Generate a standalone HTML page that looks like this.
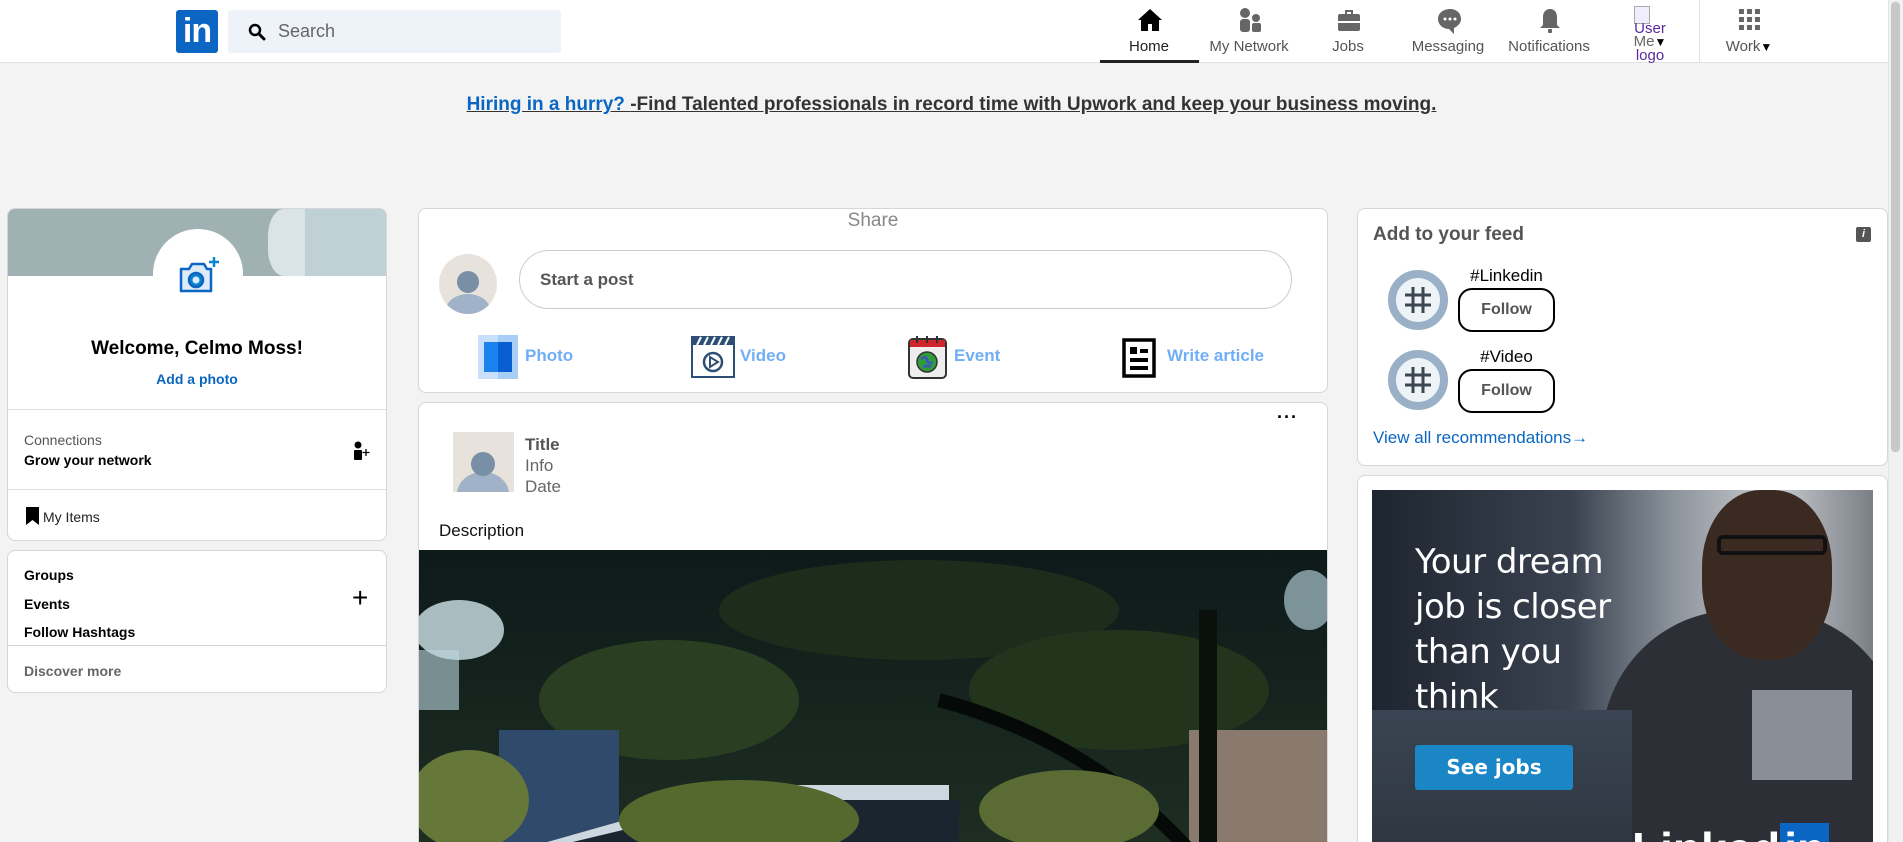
<!DOCTYPE html>
<html style="width:1903px;height:842px;overflow:hidden"><head><meta charset="utf-8">
<style>
*{box-sizing:border-box;margin:0;padding:0}
body{width:1903px;height:842px;overflow:hidden;background:#f3f3f3;font-family:"Liberation Sans",Arial,sans-serif;position:relative}
.abs{position:absolute}
.nav{position:absolute;left:0;top:0;width:1903px;height:63px;background:#fff;border-bottom:1px solid #e2e2e2}
.ni{position:absolute;top:0;width:100px;height:63px;text-align:center;font-size:15px;color:#555}
.ni svg{position:absolute;left:38px;top:7px}
.ni>span{position:absolute;left:0;right:0;top:38px;white-space:nowrap}
.card{position:absolute;background:#fff;border:1px solid #d6d6d6;border-radius:8px;overflow:hidden}
.b{font-weight:bold}
.hr{position:absolute;left:0;right:0;height:1px;background:#ddd}
</style></head><body>
<div class="nav">
  <div class="abs" style="left:176px;top:10px;width:42px;height:43px;background:#0a66c2;border-radius:3px;color:#fff;font-weight:bold;font-size:34px;line-height:43px;text-align:center;letter-spacing:-1px">in</div>
  <div class="abs" style="left:228px;top:10px;width:333px;height:43px;background:#edf3f8;border-radius:3px">
    <svg class="abs" style="left:20px;top:13px" width="18" height="18" viewBox="0 0 18 18"><circle cx="7" cy="7" r="5" fill="none" stroke="#000" stroke-width="2.5"/><path d="M11 11l5 5" stroke="#000" stroke-width="3" stroke-linecap="round"/></svg>
    <span class="abs" style="left:50px;top:11px;font-size:18px;color:#666">Search</span>
  </div>
  <div class="ni" style="left:1099px;color:#222"><svg width="26" height="26" viewBox="0 0 26 26"><path d="M13 2L1 13h3v11h7v-7h4v7h7V13h3z" fill="#000"/></svg><span>Home</span></div>
  <div class="abs" style="left:1100px;top:60px;width:99px;height:3px;background:#222"></div>
  <div class="ni" style="left:1199px"><svg width="26" height="26" viewBox="0 0 26 26"><circle cx="8" cy="6" r="5" fill="#666"/><rect x="3" y="12" width="10" height="13" rx="3" fill="#666"/><circle cx="19" cy="11" r="4" fill="#666"/><rect x="15" y="16" width="9" height="9" rx="2" fill="#666"/></svg><span>My Network</span></div>
  <div class="ni" style="left:1298px"><svg width="26" height="26" viewBox="0 0 26 26"><path d="M9 3h8v4h-2V5h-4v2H9z" fill="#666"/><rect x="2" y="7" width="22" height="17" rx="2" fill="#666"/><rect x="2" y="14" width="22" height="2" fill="#fff"/></svg><span>Jobs</span></div>
  <div class="ni" style="left:1398px"><svg width="28" height="28" viewBox="0 0 28 28"><path d="M14 2C7 2 2 6.5 2 12s5 10 11 10l5 5v-6c4-2 7-5 7-9C25 6.5 21 2 14 2z" fill="#666"/><circle cx="9" cy="12" r="1.5" fill="#fff"/><circle cx="14" cy="12" r="1.5" fill="#fff"/><circle cx="19" cy="12" r="1.5" fill="#fff"/></svg><span>Messaging</span></div>
  <div class="ni" style="left:1499px"><svg width="26" height="28" viewBox="0 0 26 28"><path d="M13 2c-5 0-7 4-7 8v8l-3 3h20l-3-3v-8c0-4-2-8-7-8z" fill="#666"/><rect x="11" y="22" width="4" height="4" rx="1" fill="#666"/></svg><span>Notifications</span></div>
  <div class="abs" style="left:1634px;top:6px;width:16px;height:18px;border:1px solid #aaa;background:#eef"></div>
  <div class="abs" style="left:1630px;top:22px;width:40px;text-align:center;font-size:15px;line-height:13px;color:#5b2aa0">User<br><span style="color:#666">Me</span><span style="color:#000;font-size:12px">▼</span><br>logo</div>
  <div class="abs" style="left:1699px;top:0;width:1px;height:63px;background:#e2e2e2"></div>
  <div class="ni" style="left:1699px"><svg width="24" height="24" viewBox="0 0 24 24" fill="#666"><rect x="2" y="2" width="5" height="5"/><rect x="10" y="2" width="5" height="5"/><rect x="18" y="2" width="5" height="5"/><rect x="2" y="10" width="5" height="5"/><rect x="10" y="10" width="5" height="5"/><rect x="18" y="10" width="5" height="5"/><rect x="2" y="18" width="5" height="5"/><rect x="10" y="18" width="5" height="5"/><rect x="18" y="18" width="5" height="5"/></svg><span>Work<span style="color:#000;font-size:12px">▼</span></span></div>
</div>
<div class="abs" style="left:0;top:94px;width:1903px;text-align:center;font-size:19px;font-weight:bold;text-decoration:underline;color:#333"><span style="color:#0a66c2">Hiring in a hurry? </span>-Find Talented professionals in record time with Upwork and keep your business moving.</div>

<!-- left -->
<div class="card" style="left:7px;top:208px;width:380px;height:333px">
  <div class="abs" style="left:0;top:0;width:380px;height:67px;background:#a0b1b3"></div>
  <div class="abs" style="left:260px;top:0;width:40px;height:67px;background:#dae4e6;border-radius:40% 0 0 40%"></div>
  <div class="abs" style="left:297px;top:0;width:83px;height:67px;background:#bfd1d4"></div>
  <div class="abs" style="left:145px;top:20px;width:90px;height:90px;border-radius:50%;background:#fff"></div>
  <svg class="abs" style="left:170px;top:46px" width="42" height="42" viewBox="0 0 42 42"><path d="M3 14h8l3-5h12l3 5h4v22H3z" fill="#dcebf7" stroke="#0a66c2" stroke-width="2.5" stroke-linejoin="round"/><circle cx="18" cy="25" r="7" fill="#0a85d0" stroke="#0a66c2" stroke-width="2.5"/><circle cx="18" cy="25" r="3.5" fill="#dcebf7"/><path d="M36 2v10M31 7h10" stroke="#0a85d0" stroke-width="2.5"/></svg>
  <div class="abs b" style="left:0;right:0;top:129px;text-align:center;font-size:19px;color:#000">Welcome, Celmo Moss!</div>
  <div class="abs b" style="left:0;right:0;top:162px;text-align:center;font-size:14px;color:#0a66c2">Add a photo</div>
  <div class="hr" style="top:200px"></div>
  <div class="abs" style="left:16px;top:223px;font-size:14px;color:#555">Connections</div>
  <div class="abs b" style="left:16px;top:243px;font-size:14px;color:#000">Grow your network</div>
  <svg class="abs" style="left:345px;top:232px" width="18" height="20" viewBox="0 0 18 20"><circle cx="5" cy="4" r="3.5"/><rect x="1" y="9" width="8" height="10" rx="1"/><path d="M13 8v7M9.5 11.5h7" stroke="#000" stroke-width="1.3"/></svg>
  <div class="hr" style="top:280px"></div>
  <svg class="abs" style="left:18px;top:298px" width="13" height="18" viewBox="0 0 13 18"><path d="M0 0h13v18l-6.5-5L0 18z"/></svg>
  <div class="abs" style="left:35px;top:300px;font-size:14px;color:#222">My Items</div>
</div>
<div class="card" style="left:7px;top:550px;width:380px;height:143px">
  <div class="abs b" style="left:16px;top:16px;font-size:14px">Groups</div>
  <div class="abs b" style="left:16px;top:45px;font-size:14px">Events</div>
  <div class="abs" style="left:344px;top:33px;font-size:28px;line-height:28px">+</div>
  <div class="abs b" style="left:16px;top:73px;font-size:14px">Follow Hashtags</div>
  <div class="hr" style="top:94px;background:#d9d3c9"></div>
  <div class="abs b" style="left:16px;top:112px;font-size:14px;color:#666">Discover more</div>
</div>

<!-- middle -->
<div class="card" style="left:418px;top:208px;width:910px;height:185px">
  <div class="abs" style="left:0;right:0;top:1px;text-align:center;font-size:19px;color:#888">Share</div>
  <svg class="abs" style="left:20px;top:45px" width="58" height="60" viewBox="0 0 58 60"><ellipse cx="29" cy="30" rx="29" ry="30" fill="#e7e2dc"/><clipPath id="c1"><ellipse cx="29" cy="30" rx="29" ry="30"/></clipPath><g clip-path="url(#c1)"><ellipse cx="29" cy="56" rx="22" ry="16" fill="#a0b2c7"/><circle cx="29" cy="28" r="11" fill="#788fa5"/></g></svg>
  <div class="abs" style="left:100px;top:41px;width:773px;height:59px;border:1px solid #ccc;border-radius:30px"></div>
  <div class="abs b" style="left:121px;top:61px;font-size:17px;color:#555">Start a post</div>
  <svg class="abs" style="left:59px;top:126px" width="40" height="44" viewBox="0 0 40 44"><rect width="40" height="44" fill="#a8cdf7"/><rect x="0" width="20" height="44" fill="#c8e0fb"/><rect x="6" y="7" width="28" height="30" fill="#1a83ee"/><rect x="20" y="7" width="14" height="30" fill="#0a5fd0"/></svg>
  <div class="abs b" style="left:106px;top:137px;font-size:17px;color:#70aef5">Photo</div>
  <svg class="abs" style="left:272px;top:127px" width="44" height="42" viewBox="0 0 44 42"><rect x="1" y="1" width="42" height="40" fill="#fff" stroke="#2e4f75" stroke-width="2"/><rect x="1" y="1" width="42" height="8" fill="#2e4f75"/><path d="M6 9l4-8M13 9l4-8M20 9l4-8M27 9l4-8M34 9l4-8" stroke="#fff" stroke-width="2"/><circle cx="22" cy="26" r="9" fill="none" stroke="#2e4f75" stroke-width="2.5"/><path d="M19 21v10l8-5z" fill="none" stroke="#2e4f75" stroke-width="2"/></svg>
  <div class="abs b" style="left:321px;top:137px;font-size:17px;color:#70aef5">Video</div>
  <svg class="abs" style="left:489px;top:126px" width="39" height="44" viewBox="0 0 39 44"><rect x="1" y="4" width="37" height="39" rx="4" fill="#eee" stroke="#333" stroke-width="2"/><rect x="2" y="5" width="35" height="7" fill="#d0262b"/><path d="M9 1v7M19 1v7M29 1v7" stroke="#333" stroke-width="2"/><circle cx="19" cy="27" r="10" fill="#2f9e3a" stroke="#333" stroke-width="1.5"/><path d="M13 24q5-4 6 1t6 2M15 32q4-2 8 0" stroke="#3a5fb0" stroke-width="3" fill="none"/></svg>
  <div class="abs b" style="left:535px;top:137px;font-size:17px;color:#70aef5">Event</div>
  <svg class="abs" style="left:703px;top:129px" width="34" height="40" viewBox="0 0 34 40"><rect x="2" y="2" width="30" height="36" fill="#fff" stroke="#000" stroke-width="3.5"/><rect x="8" y="9" width="7" height="7"/><rect x="18" y="11" width="8" height="4"/><rect x="8" y="20" width="18" height="4"/><rect x="8" y="28" width="18" height="4"/></svg>
  <div class="abs b" style="left:748px;top:137px;font-size:17px;color:#70aef5">Write article</div>
</div>
<div class="card" style="left:418px;top:402px;width:910px;height:440px;border-bottom:none;border-radius:8px 8px 0 0">
  <div class="abs b" style="left:858px;top:4px;font-size:18px;letter-spacing:1px">···</div>
  <svg class="abs" style="left:34px;top:29px" width="61" height="60" viewBox="0 0 61 60"><rect width="61" height="60" fill="#e7e2dc"/><ellipse cx="30" cy="62" rx="26" ry="22" fill="#a0b2c7"/><circle cx="30" cy="32" r="12" fill="#788fa5"/></svg>
  <div class="abs b" style="left:106px;top:32px;font-size:17px;color:#555">Title</div>
  <div class="abs" style="left:106px;top:53px;font-size:17px;color:#666">Info</div>
  <div class="abs" style="left:106px;top:74px;font-size:17px;color:#666">Date</div>
  <div class="abs" style="left:20px;top:118px;font-size:17px;color:#111">Description</div>
  <svg class="abs" style="left:0;top:147px" width="910" height="300" viewBox="0 0 910 300">
    <defs><linearGradient id="g1" x1="0" y1="0" x2="0" y2="1"><stop offset="0" stop-color="#0d1a1a"/><stop offset="1" stop-color="#1e2e22"/></linearGradient></defs>
    <rect width="910" height="300" fill="url(#g1)"/>
    <ellipse cx="40" cy="80" rx="45" ry="30" fill="#cfe3ea" opacity=".8"/>
    <ellipse cx="890" cy="50" rx="25" ry="30" fill="#a9c6cf" opacity=".7"/>
    <rect x="0" y="100" width="40" height="60" fill="#bcd7e0" opacity=".6"/>
    <ellipse cx="500" cy="60" rx="200" ry="50" fill="#1c2e1b"/>
    <ellipse cx="250" cy="150" rx="130" ry="60" fill="#2a3f22"/>
    <ellipse cx="700" cy="140" rx="150" ry="60" fill="#22351c"/>
    <rect x="80" y="180" width="120" height="120" fill="#2f4a6a"/>
    <path d="M100 300L330 235h200v65z" fill="#cdd7df"/>
    <path d="M120 300L330 250h210v50z" fill="#1a2530"/>
    <ellipse cx="50" cy="250" rx="60" ry="50" fill="#66773a"/>
    <ellipse cx="320" cy="270" rx="120" ry="40" fill="#55692e"/>
    <rect x="770" y="180" width="140" height="120" fill="#8a7a6e"/>
    <path d="M520 150q150 40 250 150" stroke="#050a08" stroke-width="14" fill="none"/>
    <rect x="780" y="60" width="18" height="240" fill="#0a100c"/>
    <ellipse cx="650" cy="260" rx="90" ry="40" fill="#5a6c34"/>
  </svg>
</div>

<!-- right -->
<div class="card" style="left:1357px;top:208px;width:531px;height:258px">
  <div class="abs b" style="left:15px;top:15px;font-size:19px;color:#555">Add to your feed</div>
  <div class="abs" style="left:498px;top:18px;width:15px;height:15px;background:#555;border-radius:2px;color:#fff;font-size:11px;font-weight:bold;font-style:italic;text-align:center;line-height:15px">i</div>
  <svg class="abs" style="left:30px;top:61px" width="60" height="60" viewBox="0 0 60 60"><circle cx="30" cy="30" r="26" fill="#eef3f8" stroke="#9ab0c6" stroke-width="8"/><path d="M25 17v26M35 17v26M17 25h26M17 35h26" stroke="#3c4550" stroke-width="3"/></svg>
  <div class="abs" style="left:100px;top:57px;width:97px;text-align:center;font-size:17px;color:#000">#Linkedin</div>
  <div class="abs b" style="left:100px;top:79px;width:97px;height:44px;border:2px solid #000;border-radius:14px;text-align:center;line-height:40px;font-size:16px;color:#555">Follow</div>
  <svg class="abs" style="left:30px;top:141px" width="60" height="60" viewBox="0 0 60 60"><circle cx="30" cy="30" r="26" fill="#eef3f8" stroke="#9ab0c6" stroke-width="8"/><path d="M25 17v26M35 17v26M17 25h26M17 35h26" stroke="#3c4550" stroke-width="3"/></svg>
  <div class="abs" style="left:100px;top:138px;width:97px;text-align:center;font-size:17px;color:#000">#Video</div>
  <div class="abs b" style="left:100px;top:160px;width:97px;height:44px;border:2px solid #000;border-radius:14px;text-align:center;line-height:40px;font-size:16px;color:#555">Follow</div>
  <div class="abs" style="left:15px;top:219px;font-size:17px;color:#0a66c2">View all recommendations<b>→</b></div>
</div>
<div class="card" style="left:1357px;top:475px;width:531px;height:367px;border-bottom:none;border-radius:8px 8px 0 0">
  <div class="abs" style="left:14px;top:14px;width:501px;height:380px;overflow:hidden;background:linear-gradient(90deg,#1e2530 0%,#3a4250 40%,#8b929a 60%,#c9ccd0 80%,#7a7f86 100%)">
    <div class="abs" style="left:230px;top:120px;width:300px;height:300px;border-radius:45% 45% 0 0;background:#2c3036"></div>
    <div class="abs" style="left:330px;top:0;width:130px;height:170px;border-radius:45%;background:#3b2a22"></div>
    <div class="abs" style="left:345px;top:45px;width:110px;height:20px;border:4px solid #111;border-radius:6px"></div>
    <div class="abs" style="left:380px;top:200px;width:100px;height:90px;background:#8a8e96"></div>
    <div class="abs" style="left:0;top:220px;width:260px;height:200px;background:linear-gradient(180deg,#3a4452,#2a303a)"></div>
    <div class="abs" style="left:43px;top:50px;font-family:'DejaVu Sans',sans-serif;font-size:34px;line-height:45px;color:#fff;letter-spacing:-.5px">Your dream<br>job is closer<br>than you<br>think</div>
    <div class="abs b" style="left:43px;top:255px;width:158px;height:45px;background:#1b86c6;border-radius:3px;color:#fff;font-family:'DejaVu Sans',sans-serif;font-size:20px;text-align:center;line-height:45px">See jobs</div>
    <div class="abs b" style="left:260px;top:332px;font-size:46px;color:#fff">Linked<span style="background:#0a66c2;padding:0 4px">in</span></div>
  </div>
</div>
<div class="abs" style="left:1888px;top:0;width:15px;height:842px;background:#f1f1f1;border-left:1px solid #e5e5e5"></div>
<div class="abs" style="left:1891px;top:2px;width:9px;height:450px;background:#c8c8c8;border-radius:4px"></div>
</body></html>
